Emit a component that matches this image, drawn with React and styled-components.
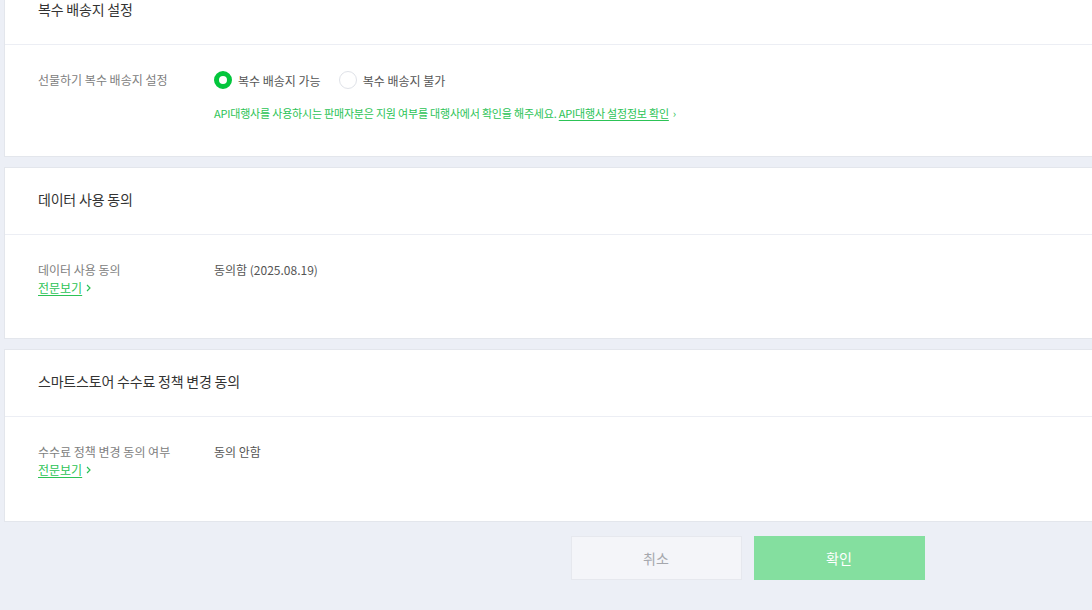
import React, {useState} from 'react';
import styled, {createGlobalStyle} from 'styled-components';

const GlobalStyle = createGlobalStyle`
  html, body {
    margin: 0;
    padding: 0;
    background: #eceff6;
    overflow: hidden;
  }
  body {
    font-family: "Noto Sans CJK KR", "Noto Sans", sans-serif;
    color: #333;
  }
`

const Page = styled.div`
  width: 1487px;
  margin: -23px 0 0 4px;
  display: flex;
  flex-direction: column;
  gap: 10px;
`

const Card = styled.section`
  background: #fff;
  border: 1px solid #e3e6ec;
`

const CardHeader = styled.div`
  height: 67px;
  box-sizing: border-box;
  display: flex;
  align-items: center;
  padding: 0 33px 4px;
  border-bottom: 1px solid #eceef4;
  font-size: 14px;
  font-weight: 400;
  color: #333;
  letter-spacing: -0.2px;
`

const CardBody = styled.div`
  padding: ${props => props.$pad || '26px 33px 40px'};
`

const Row = styled.div`
  display: flex;
  align-items: flex-start;
`

const Label = styled.div`
  width: 176px;
  flex-shrink: 0;
  font-size: 12px;
  line-height: 18px;
  color: #808080;
`

const Value = styled.div`
  font-size: 12px;
  line-height: 18px;
  color: #555;
`

const MoreLink = styled.a`
  display: inline-flex;
  align-items: center;
  gap: 4px;
  font-size: 12px;
  line-height: 18px;
  color: #2cc356;
  text-decoration: none;
  cursor: pointer;

  span {
    text-decoration: underline;
    text-underline-offset: 2px;
  }
`

const RadioGroup = styled.div`
  display: flex;
  align-items: center;
  gap: 18px;
  height: 20px;
  margin-top: -1px;
`

const RadioItem = styled.label`
  display: flex;
  align-items: center;
  gap: 6px;
  font-size: 12px;
  color: #555;
  cursor: pointer;
`

const RadioCircle = styled.span`
  width: 18px;
  height: 18px;
  border-radius: 50%;
  box-sizing: border-box;
  border: ${props => props.$checked ? '5px solid #03c63c' : '1px solid #dfe2e8'};
  background: #fff;
`

const Notice = styled.p`
  margin: 15px 0 0;
  font-size: 11px;
  line-height: 16px;
  color: #2cc356;
  letter-spacing: -0.2px;

  a {
    color: #2cc356;
    text-decoration: underline;
    text-underline-offset: 2px;
  }
`

const Chevron = styled.i`
  font-style: normal;
  font-size: 11px;
  margin-left: 4px;
`

const Actions = styled.div`
  display: flex;
  justify-content: center;
  gap: 12px;
  padding: 4px 0;
`

const Button = styled.button`
  width: 171px;
  height: 44px;
  box-sizing: border-box;
  font-family: inherit;
  font-size: 14px;
  border: 1px solid ${props => props.$primary ? '#84df9f' : '#e6e8ee'};
  background: ${props => props.$primary ? '#84df9f' : '#f4f5f9'};
  color: ${props => props.$primary ? '#fff' : '#a5a7ad'};
  cursor: pointer;
`

const Arrow = () => (
  <svg width="5" height="8" viewBox="0 0 5 8">
    <path d="M1 1l3 3-3 3" fill="none" stroke="currentColor" strokeWidth="1.2"/>
  </svg>
)

const App = () => {
  const [multi, setMulti] = useState(true)

  return (
    <>
      <GlobalStyle/>
      <Page>
        <Card>
          <CardHeader>복수 배송지 설정</CardHeader>
          <CardBody $pad='26px 33px 35px'>
            <Row>
              <Label>선물하기 복수 배송지 설정</Label>
              <div>
                <RadioGroup>
                  <RadioItem onClick={() => setMulti(true)}>
                    <RadioCircle $checked={multi}/>복수 배송지 가능
                  </RadioItem>
                  <RadioItem onClick={() => setMulti(false)}>
                    <RadioCircle $checked={!multi}/>복수 배송지 불가
                  </RadioItem>
                </RadioGroup>
                <Notice>
                  API대행사를 사용하시는 판매자분은 지원 여부를 대행사에서 확인을 해주세요. <a>API대행사 설정정보 확인</a><Chevron>›</Chevron>
                </Notice>
              </div>
            </Row>
          </CardBody>
        </Card>

        <Card>
          <CardHeader>데이터 사용 동의</CardHeader>
          <CardBody $pad='26px 33px 41px'>
            <Row>
              <Label>
                데이터 사용 동의
                <div><MoreLink><span>전문보기</span><Arrow/></MoreLink></div>
              </Label>
              <Value>동의함 (2025.08.19)</Value>
            </Row>
          </CardBody>
        </Card>

        <Card>
          <CardHeader>스마트스토어 수수료 정책 변경 동의</CardHeader>
          <CardBody $pad='26px 33px 42px'>
            <Row>
              <Label>
                수수료 정책 변경 동의 여부
                <div><MoreLink><span>전문보기</span><Arrow/></MoreLink></div>
              </Label>
              <Value>동의 안함</Value>
            </Row>
          </CardBody>
        </Card>

        <Actions>
          <Button>취소</Button>
          <Button $primary>확인</Button>
        </Actions>
      </Page>
    </>
  )
}

export default App
